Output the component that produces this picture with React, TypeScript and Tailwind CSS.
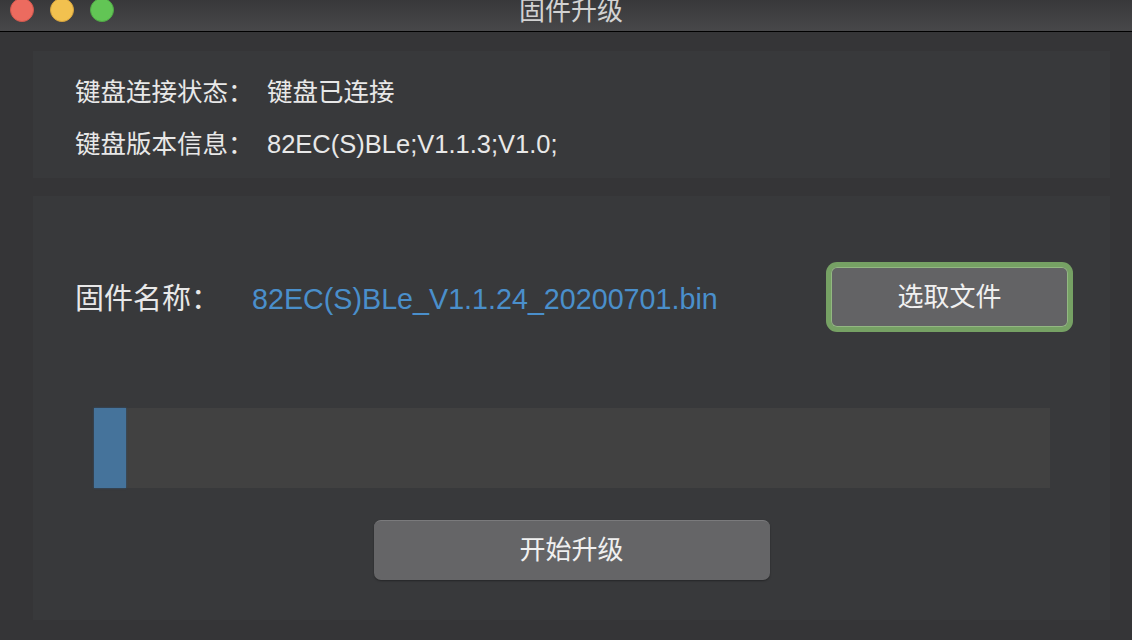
const font = {
  fontFamily: '"Liberation Sans", "Noto Sans CJK SC", sans-serif',
}

export default function App() {
  const progress = 32

  return (
    <div className="w-[1132px] h-[640px] overflow-hidden bg-[#353537] text-[#e8e8e8] flex flex-col" style={font}>
      {/* title bar */}
      <div className="relative h-[32px] shrink-0 overflow-hidden border-b border-black bg-gradient-to-b from-[#38383a] to-[#48484a]">
        <div className="flex items-center gap-[16px] h-[31px] pl-[10px] pb-[11px]">
          <span className="block w-[24px] h-[24px] shrink-0 rounded-full bg-[#ec6b5f] border border-[#d2574d]" />
          <span className="block w-[24px] h-[24px] shrink-0 rounded-full bg-[#f2c14f] border border-[#d6a33c]" />
          <span className="block w-[24px] h-[24px] shrink-0 rounded-full bg-[#62c555] border border-[#4fa845]" />
        </div>
        <div className="absolute top-0 left-[519px] h-[31px] flex items-center pb-[10px] text-[26px] leading-[26px] text-[#d2d2d2]">
          固件升级
        </div>
      </div>

      <div className="flex flex-col gap-[18px] pl-[33px] pr-[22px] pt-[19px]">
        {/* status panel */}
        <div className="h-[127px] bg-[#38393b] flex flex-col gap-[16px] pt-[23px] pl-[42px] text-[25.5px] leading-[36px]">
          <div className="flex">
            <span className="w-[192px]">键盘连接状态：</span>
            <span>键盘已连接</span>
          </div>
          <div className="flex">
            <span className="w-[192px]">键盘版本信息：</span>
            <span>82EC(S)BLe;V1.1.3;V1.0;</span>
          </div>
        </div>

        {/* upgrade panel */}
        <div className="h-[424px] bg-[#38393b] flex flex-col pt-[66px]">
          <div className="flex items-center pl-[42px] pr-[37px]">
            <span className="w-[177px] text-[29px] leading-[36px] mt-[3px]">固件名称：</span>
            <span className="text-[28.7px] leading-[36px] text-[#4a8fcb] mt-[3px]">82EC(S)BLe_V1.1.24_20200701.bin</span>
            <div className="ml-auto w-[247px] h-[70px] rounded-[11px] bg-[#76a164] p-[5px]">
              <button className="w-full h-full rounded-[6px] bg-[#636365] shadow-[inset_0_0_0_1px_#93b882] text-[26px] text-[#f0f0f0] flex items-center justify-center">
                选取文件
              </button>
            </div>
          </div>

          <div className="mt-[76px] mx-auto w-[956px] h-[80px] bg-[#414141] flex">
            <div className="h-full bg-[#45739b] shadow-[0_0_2px_#2f5678]" style={{ width: progress }} />
          </div>

          <button className="mt-[32px] mx-auto w-[396px] h-[60px] rounded-[7px] bg-[#656567] border-t border-[#7a7a7c] shadow-[0_1px_2px_rgba(0,0,0,0.35)] text-[26px] text-[#f0f0f0] flex items-center justify-center">
            开始升级
          </button>
        </div>
      </div>
    </div>
  )
}
